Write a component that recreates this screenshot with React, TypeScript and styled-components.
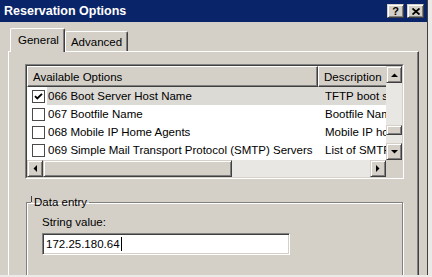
import styled, { createGlobalStyle, css } from "styled-components";

const colors = {
  face: "#d4d0c8",
  light: "#ffffff",
  shadow: "#808080",
  dark: "#404040",
  title: "#0a246a",
  track: "#e9e7e3",
  selected: "#dcdad5",
  page: "#ebeae6",
};

const GlobalStyle = createGlobalStyle`
  * { box-sizing: border-box; }
  html, body {
    margin: 0;
    padding: 0;
    background: ${colors.page};
  }
  body {
    font-family: "Liberation Sans", Arial, sans-serif;
    font-size: 11.5px;
    color: #000;
  }
`;

const raised = css`
  border: 1px solid;
  border-color: ${colors.face} ${colors.dark} ${colors.dark} ${colors.face};
  box-shadow: inset 1px 1px ${colors.light}, inset -1px -1px ${colors.shadow};
  background: ${colors.face};
`;

const Window = styled.div`
  width: 428px;
  height: 275px;
  overflow: hidden;
  background: ${colors.face};
  border-right: 1px solid ${colors.dark};
  display: flex;
  flex-direction: column;
`;

const TitleBar = styled.div`
  height: 22px;
  flex-shrink: 0;
  background: ${colors.title};
  color: ${colors.light};
  padding: 0 3px 0 4px;
  display: flex;
  align-items: center;
  justify-content: space-between;
`;

const Title = styled.span`
  font-weight: 700;
  font-size: 12.5px;
  letter-spacing: 0;
`;

const CaptionButtons = styled.div`
  display: flex;
  gap: 3px;
`;

const CaptionButton = styled.div`
  ${raised};
  width: 17px;
  height: 14px;
  display: flex;
  align-items: center;
  justify-content: center;
  color: #000;
  font-weight: 700;
  font-size: 11px;
  line-height: 1;
`;

const Body = styled.div`
  flex: 1;
  padding: 6px 8px 0 8px;
  display: flex;
  flex-direction: column;
`;

const TabStrip = styled.div`
  display: flex;
  align-items: flex-end;
  height: 23px;
  padding-left: 2px;
  position: relative;
  z-index: 1;
`;

const Tab = styled.div<{ $active?: boolean }>`
  height: ${({ $active }) => ($active ? "24px" : "20px")};
  margin-bottom: ${({ $active }) => ($active ? "-1px" : "0")};
  padding: ${({ $active }) => ($active ? "0 5px 0 7px" : "0 5px 0 5px")};
  padding-bottom: ${({ $active }) => ($active ? "2px" : "0")};
  background: ${colors.face};
  border-top: 1px solid ${colors.light};
  border-left: 1px solid ${colors.light};
  border-right: 1px solid ${colors.dark};
  box-shadow: inset -1px 0 ${colors.shadow};
  border-radius: 2px 2px 0 0;
  display: flex;
  align-items: center;
  position: relative;
  z-index: ${({ $active }) => ($active ? 2 : 1)};
`;

const Panel = styled.div`
  flex: 1;
  background: ${colors.face};
  border-top: 1px solid ${colors.light};
  border-left: 1px solid ${colors.light};
  border-right: 1px solid ${colors.dark};
  box-shadow: inset -1px 0 ${colors.shadow};
  padding: 12px 14px 0 16px;
  display: flex;
  flex-direction: column;
`;

const ListView = styled.div`
  height: 115px;
  flex-shrink: 0;
  border: 1px solid;
  border-color: ${colors.shadow} ${colors.light} ${colors.light} ${colors.shadow};
`;

const ListInner = styled.div`
  height: 100%;
  border: 1px solid;
  border-color: ${colors.dark} ${colors.face} ${colors.face} ${colors.dark};
  background: ${colors.light};
  display: grid;
  grid-template-columns: 1fr 16px;
  grid-template-rows: 1fr 17px;
`;

const ListMain = styled.div`
  overflow: hidden;
  min-width: 0;
`;

const Header = styled.div`
  display: flex;
  height: 21px;
`;

const HeaderCell = styled.div<{ $width: number }>`
  width: ${({ $width }) => $width}px;
  flex-shrink: 0;
  background: ${colors.face};
  border-top: 1px solid ${colors.light};
  border-left: 1px solid ${colors.light};
  border-bottom: 1px solid ${colors.dark};
  border-right: 1px solid ${colors.dark};
  box-shadow: inset -1px -1px ${colors.shadow};
  padding-left: 5px;
  display: flex;
  align-items: center;
  white-space: nowrap;
`;

const Row = styled.div`
  display: flex;
  height: 18px;
`;

const NameCell = styled.div`
  width: 291px;
  flex-shrink: 0;
  display: flex;
  align-items: center;
  padding-left: 5px;
`;

const CheckBox = styled.div`
  width: 13px;
  height: 13px;
  flex-shrink: 0;
  border: 1px solid #4a4a4a;
  background: ${colors.light};
  margin-right: 2px;
  display: flex;
  align-items: center;
  justify-content: center;
`;

const Label = styled.div<{ $selected?: boolean }>`
  flex: 1;
  height: 100%;
  padding-left: 1px;
  display: flex;
  align-items: center;
  white-space: nowrap;
  background: ${({ $selected }) => ($selected ? colors.selected : "transparent")};
`;

const DescCell = styled.div<{ $selected?: boolean }>`
  width: 200px;
  flex-shrink: 0;
  padding-left: 7px;
  display: flex;
  align-items: center;
  white-space: nowrap;
  background: ${({ $selected }) => ($selected ? colors.selected : "transparent")};
`;

const VScroll = styled.div`
  display: flex;
  flex-direction: column;
`;

const HScroll = styled.div`
  display: flex;
  min-width: 0;
`;

const ScrollButton = styled.div<{ $vertical?: boolean }>`
  ${raised};
  flex-shrink: 0;
  width: ${({ $vertical }) => ($vertical ? "16px" : "16px")};
  height: ${({ $vertical }) => ($vertical ? "17px" : "17px")};
  display: flex;
  align-items: center;
  justify-content: center;
`;

const Track = styled.div<{ $size?: number }>`
  background: ${colors.track};
  flex: ${({ $size }) => ($size ? `0 0 ${$size}px` : "1")};
`;

const Thumb = styled.div<{ $size: number }>`
  ${raised};
  flex: 0 0 ${({ $size }) => $size}px;
`;

const Corner = styled.div`
  background: ${colors.face};
`;

const GroupBox = styled.fieldset`
  margin: 16px 1px 0;
  padding: 0;
  min-width: 0;
  height: 90px;
  border: 1px solid ${colors.shadow};
  box-shadow: inset 1px 1px ${colors.light}, 1px 1px ${colors.light};
`;

const Legend = styled.legend`
  margin-left: 4px;
  padding: 0 2px 0 0;
  line-height: 14px;
  font-size: 11.5px;
`;

const Tick = styled.span`
  display: inline-block;
  width: 1px;
  height: 6px;
  background: ${colors.dark};
  margin-right: 2px;
  vertical-align: 4px;
`;

const FieldBody = styled.div`
  padding: 6px 15px 0;
  display: flex;
  flex-direction: column;
  gap: 4px;
`;

const FieldLabel = styled.div`
  line-height: 14px;
`;

const TextBox = styled.div`
  width: 248px;
  height: 22px;
  border: 1px solid;
  border-color: ${colors.shadow} ${colors.light} ${colors.light} ${colors.shadow};
  box-shadow: inset 1px 1px ${colors.dark}, inset -1px -1px ${colors.face};
  background: ${colors.light};
  padding-left: 3px;
  display: flex;
  align-items: center;
`;

const Caret = styled.span`
  display: inline-block;
  width: 1px;
  height: 14px;
  background: #000;
  margin-left: 1px;
`;

type Dir = "up" | "down" | "left" | "right";

const arrowPoints: Record<Dir, string> = {
  up: "0,4 7,4 3.5,0.5",
  down: "0,0 7,0 3.5,3.5",
  left: "4,0 4,7 0.5,3.5",
  right: "0,0 0,7 3.5,3.5",
};

function Arrow({ dir }: { dir: Dir }) {
  const horiz = dir === "left" || dir === "right";
  return (
    <svg width={horiz ? 4 : 7} height={horiz ? 7 : 4} viewBox={horiz ? "0 0 4 7" : "0 0 7 4"}>
      <polygon points={arrowPoints[dir]} fill="#000" />
    </svg>
  );
}

function CheckMark() {
  return (
    <svg width="9" height="9" viewBox="0 0 9 9">
      <polyline points="1,4.2 3.3,6.5 8,1.8" fill="none" stroke="#000" strokeWidth="1.9" />
    </svg>
  );
}

const options = [
  { name: "066 Boot Server Host Name", desc: "TFTP boot server host name", checked: true },
  { name: "067 Bootfile Name", desc: "Bootfile Name", checked: false },
  { name: "068 Mobile IP Home Agents", desc: "Mobile IP home agents in priority order", checked: false },
  { name: "069 Simple Mail Transport Protocol (SMTP) Servers", desc: "List of SMTP servers available", checked: false },
];

export default function App() {
  return (
    <>
      <GlobalStyle />
      <Window>
        <TitleBar>
          <Title>Reservation Options</Title>
          <CaptionButtons>
            <CaptionButton>?</CaptionButton>
            <CaptionButton>
              <svg width="8" height="7" viewBox="0 0 8 7">
                <path d="M0.5 0.5 L7.5 6.5 M7.5 0.5 L0.5 6.5" stroke="#000" strokeWidth="1.8" />
              </svg>
            </CaptionButton>
          </CaptionButtons>
        </TitleBar>
        <Body>
          <TabStrip>
            <Tab $active>General</Tab>
            <Tab>Advanced</Tab>
          </TabStrip>
          <Panel>
            <ListView>
              <ListInner>
                <ListMain>
                  <Header>
                    <HeaderCell $width={291}>Available Options</HeaderCell>
                    <HeaderCell $width={200}>Description</HeaderCell>
                  </Header>
                  {options.map((o, i) => (
                    <Row key={o.name}>
                      <NameCell>
                        <CheckBox>{o.checked && <CheckMark />}</CheckBox>
                        <Label $selected={i === 0}>{o.name}</Label>
                      </NameCell>
                      <DescCell $selected={i === 0}>{o.desc}</DescCell>
                    </Row>
                  ))}
                </ListMain>
                <VScroll>
                  <ScrollButton $vertical>
                    <Arrow dir="up" />
                  </ScrollButton>
                  <Track $size={42} />
                  <Thumb $size={10} />
                  <Track />
                  <ScrollButton $vertical>
                    <Arrow dir="down" />
                  </ScrollButton>
                </VScroll>
                <HScroll>
                  <ScrollButton>
                    <Arrow dir="left" />
                  </ScrollButton>
                  <Thumb $size={189} />
                  <Track />
                  <ScrollButton>
                    <Arrow dir="right" />
                  </ScrollButton>
                </HScroll>
                <Corner />
              </ListInner>
            </ListView>
            <GroupBox>
              <Legend>
                <Tick />
                Data entry
              </Legend>
              <FieldBody>
                <FieldLabel>String value:</FieldLabel>
                <TextBox>
                  172.25.180.64
                  <Caret />
                </TextBox>
              </FieldBody>
            </GroupBox>
          </Panel>
        </Body>
      </Window>
    </>
  );
}
